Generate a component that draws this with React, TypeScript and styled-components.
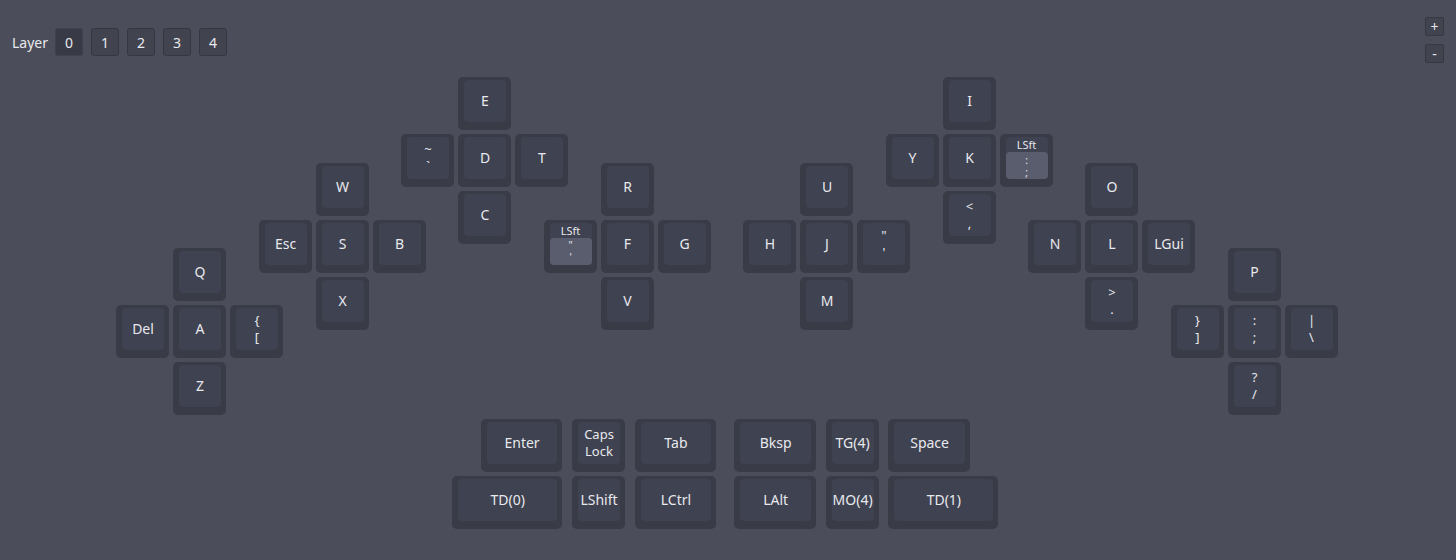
import React from 'react';
import styled, { createGlobalStyle } from 'styled-components';

const UNIT = 57;
const GAP = 4;

const GlobalStyle = createGlobalStyle`
  html, body {
    margin: 0;
    padding: 0;
    background: #4b4e5a;
    font-family: 'Noto Sans', 'Open Sans', 'Liberation Sans', sans-serif;
    color: #e8e9ee;
  }
`;

const Page = styled.div`
  width: 1456px;
  height: 560px;
  overflow: hidden;
  display: flex;
  flex-direction: column;
`;

const Header = styled.div`
  display: flex;
  justify-content: space-between;
  align-items: flex-start;
  padding: 17px 12px 0 12px;
  height: 60px;
`;

const LayerBar = styled.div`
  display: flex;
  align-items: center;
  gap: 8px;
  margin-top: 11px;
`;

const LayerLabel = styled.span`
  font-size: 14px;
  margin-right: -1px;
`;

const LayerButton = styled.button<{ $active?: boolean }>`
  width: 28px;
  height: 28px;
  padding: 0;
  border-radius: 3px;
  font-family: inherit;
  font-size: 14px;
  color: #e8e9ee;
  cursor: pointer;
  background: ${(p) => (p.$active ? '#383a45' : '#41444f')};
  border: 1px solid ${(p) => (p.$active ? '#3f424d' : '#353741')};
`;

const ZoomControls = styled.div`
  display: flex;
  flex-direction: column;
  gap: 8px;
`;

const ZoomButton = styled.button`
  width: 19px;
  height: 19px;
  padding: 0;
  border-radius: 2px;
  background: #41444f;
  border: 1px solid #363842;
  color: #e8e9ee;
  font-family: inherit;
  font-size: 14px;
  line-height: 1;
  cursor: pointer;
`;

const Canvas = styled.div`
  position: relative;
  width: 1224px;
  height: 456px;
  margin: 0 auto;
`;

const KeyBase = styled.div.attrs<{ $x: number; $y: number; $w: number }>((p) => ({
  style: {
    left: `${p.$x * UNIT}px`,
    top: `${p.$y * UNIT}px`,
    width: `${p.$w * UNIT - GAP}px`,
  },
}))<{ $x: number; $y: number; $w: number }>`
  position: absolute;
  height: ${UNIT - GAP}px;
  box-sizing: border-box;
  padding: 3px 5px 8px 6px;
  background: #393b47;
  border-radius: 5px;
`;

const KeyCap = styled.div<{ $multi?: boolean }>`
  height: 100%;
  display: flex;
  flex-direction: column;
  align-items: center;
  justify-content: center;
  background: #3f4250;
  border-radius: 4px;
  font-size: ${(p) => (p.$multi ? '13px' : '14px')};
  line-height: ${(p) => (p.$multi ? '17px' : '16px')};
  text-align: center;
  white-space: nowrap;
`;

const ModLabel = styled.div`
  font-size: 11px;
  line-height: 15px;
  height: 15px;
`;

const ModInner = styled.div`
  flex: 1;
  align-self: stretch;
  display: flex;
  flex-direction: column;
  align-items: center;
  justify-content: center;
  background: #5a5d6d;
  border-radius: 4px;
  font-size: 10px;
  line-height: 12px;
`;

type KeyDef = {
  x: number;
  y: number;
  w?: number;
  label: string[];
  mod?: string;
};

const keys: KeyDef[] = [
  // left hand
  { x: 0, y: 4, label: ['Del'] },
  { x: 1, y: 3, label: ['Q'] },
  { x: 1, y: 4, label: ['A'] },
  { x: 1, y: 5, label: ['Z'] },
  { x: 2, y: 4, label: ['{', '['] },
  { x: 2.5, y: 2.5, label: ['Esc'] },
  { x: 3.5, y: 1.5, label: ['W'] },
  { x: 3.5, y: 2.5, label: ['S'] },
  { x: 3.5, y: 3.5, label: ['X'] },
  { x: 4.5, y: 2.5, label: ['B'] },
  { x: 5, y: 1, label: ['~', '`'] },
  { x: 6, y: 0, label: ['E'] },
  { x: 6, y: 1, label: ['D'] },
  { x: 6, y: 2, label: ['C'] },
  { x: 7, y: 1, label: ['T'] },
  { x: 7.5, y: 2.5, label: ['"', "'"], mod: 'LSft' },
  { x: 8.5, y: 1.5, label: ['R'] },
  { x: 8.5, y: 2.5, label: ['F'] },
  { x: 8.5, y: 3.5, label: ['V'] },
  { x: 9.5, y: 2.5, label: ['G'] },
  // right hand
  { x: 11, y: 2.5, label: ['H'] },
  { x: 12, y: 1.5, label: ['U'] },
  { x: 12, y: 2.5, label: ['J'] },
  { x: 12, y: 3.5, label: ['M'] },
  { x: 13, y: 2.5, label: ['"', "'"] },
  { x: 13.5, y: 1, label: ['Y'] },
  { x: 14.5, y: 0, label: ['I'] },
  { x: 14.5, y: 1, label: ['K'] },
  { x: 14.5, y: 2, label: ['<', ','] },
  { x: 15.5, y: 1, label: [':', ';'], mod: 'LSft' },
  { x: 16, y: 2.5, label: ['N'] },
  { x: 17, y: 1.5, label: ['O'] },
  { x: 17, y: 2.5, label: ['L'] },
  { x: 17, y: 3.5, label: ['>', '.'] },
  { x: 18, y: 2.5, label: ['LGui'] },
  { x: 18.5, y: 4, label: ['}', ']'] },
  { x: 19.5, y: 3, label: ['P'] },
  { x: 19.5, y: 4, label: [':', ';'] },
  { x: 19.5, y: 5, label: ['?', '/'] },
  { x: 20.5, y: 4, label: ['|', '\\'] },
  // thumbs
  { x: 6.4, y: 6, w: 1.5, label: ['Enter'] },
  { x: 8.0, y: 6, label: ['Caps', 'Lock'] },
  { x: 9.1, y: 6, w: 1.5, label: ['Tab'] },
  { x: 5.9, y: 7, w: 2, label: ['TD(0)'] },
  { x: 8.0, y: 7, label: ['LShift'] },
  { x: 9.1, y: 7, w: 1.5, label: ['LCtrl'] },
  { x: 10.85, y: 6, w: 1.5, label: ['Bksp'] },
  { x: 12.45, y: 6, label: ['TG(4)'] },
  { x: 13.55, y: 6, w: 1.5, label: ['Space'] },
  { x: 10.85, y: 7, w: 1.5, label: ['LAlt'] },
  { x: 12.45, y: 7, label: ['MO(4)'] },
  { x: 13.55, y: 7, w: 2, label: ['TD(1)'] },
];

const Key: React.FC<{ def: KeyDef }> = ({ def }) => (
  <KeyBase $x={def.x} $y={def.y} $w={def.w ?? 1}>
    <KeyCap $multi={!def.mod && def.label.length > 1}>
      {def.mod ? (
        <>
          <ModLabel>{def.mod}</ModLabel>
          <ModInner>
            {def.label.map((l, i) => (
              <span key={i}>{l}</span>
            ))}
          </ModInner>
        </>
      ) : (
        def.label.map((l, i) => <span key={i}>{l}</span>)
      )}
    </KeyCap>
  </KeyBase>
);

const App: React.FC = () => {
  return (
    <Page>
      <GlobalStyle />
      <Header>
        <LayerBar>
          <LayerLabel>Layer</LayerLabel>
          {[0, 1, 2, 3, 4].map((n) => (
            <LayerButton key={n} $active={n === 0}>
              {n}
            </LayerButton>
          ))}
        </LayerBar>
        <ZoomControls>
          <ZoomButton>+</ZoomButton>
          <ZoomButton>-</ZoomButton>
        </ZoomControls>
      </Header>
      <Canvas>
        {keys.map((k, i) => (
          <Key key={i} def={k} />
        ))}
      </Canvas>
    </Page>
  );
};

export default App;
